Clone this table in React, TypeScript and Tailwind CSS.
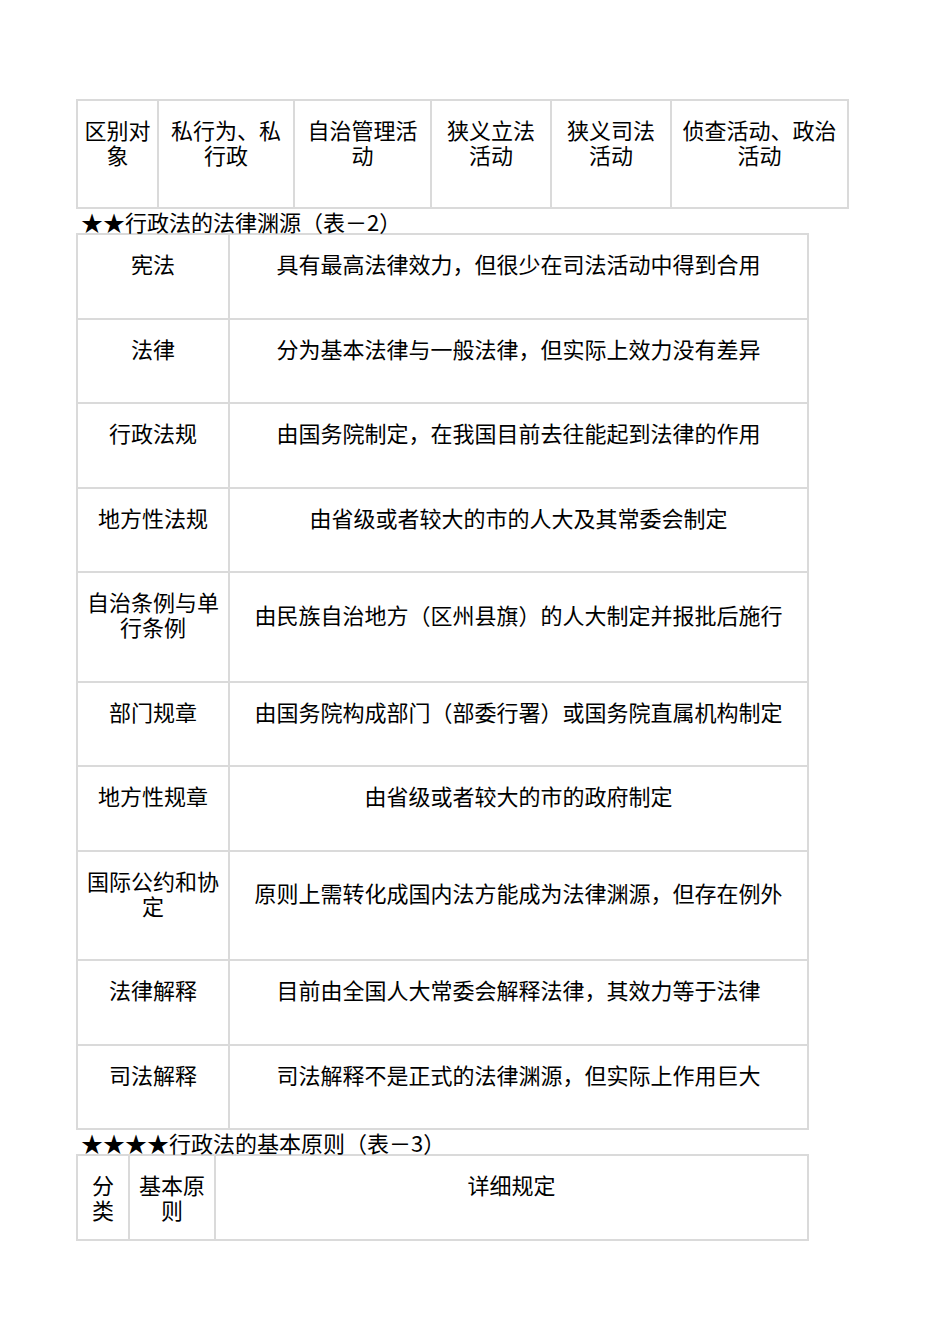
import React from "react";

const font = { fontFamily: '"Noto Sans CJK SC", "Noto Sans", sans-serif' };

const t2: [string, string][] = [
  ["宪法", "具有最高法律效力，但很少在司法活动中得到合用"],
  ["法律", "分为基本法律与一般法律，但实际上效力没有差异"],
  ["行政法规", "由国务院制定，在我国目前去往能起到法律的作用"],
  ["地方性法规", "由省级或者较大的市的人大及其常委会制定"],
  ["自治条例与单行条例", "由民族自治地方（区州县旗）的人大制定并报批后施行"],
  ["部门规章", "由国务院构成部门（部委行署）或国务院直属机构制定"],
  ["地方性规章", "由省级或者较大的市的政府制定"],
  ["国际公约和协定", "原则上需转化成国内法方能成为法律渊源，但存在例外"],
  ["法律解释", "目前由全国人大常委会解释法律，其效力等于法律"],
  ["司法解释", "司法解释不是正式的法律渊源，但实际上作用巨大"],
];

const cell =
  "border-2 border-[#dadada] px-[7px] pt-[16px] pb-[41.5px] text-center align-middle";
const cell1 =
  "border-2 border-[#dadada] px-[5px] pt-[16px] pb-[40px] text-center align-middle";
const cell3 =
  "border-2 border-[#dadada] px-[5px] pt-[16px] pb-[17px] text-center align-top";

export default function App() {
  return (
    <div
      className="w-[950px] min-h-[1344px] bg-white text-black text-[22px] leading-[25px] pt-[99px] pl-[76px]"
      style={font}
    >
      <table className="table-fixed border-collapse w-[771px]">
        <colgroup>
          <col className="w-[81px]" />
          <col className="w-[136px]" />
          <col className="w-[137px]" />
          <col className="w-[120px]" />
          <col className="w-[120px]" />
          <col className="w-[177px]" />
        </colgroup>
        <tbody>
          <tr>
            <td className={cell1}>区别对象</td>
            <td className={cell1}>私行为、私行政</td>
            <td className={cell1}>自治管理活动</td>
            <td className={cell1}>狭义立法活动</td>
            <td className={cell1}>狭义司法活动</td>
            <td className={cell1}>侦查活动、政治活动</td>
          </tr>
        </tbody>
      </table>
      <div className="pl-[5px] leading-[24px]">★★行政法的法律渊源（表－2）</div>
      <table className="table-fixed border-collapse w-[731px]">
        <colgroup>
          <col className="w-[152px]" />
          <col className="w-[579px]" />
        </colgroup>
        <tbody>
          {t2.map(([a, b]) => (
            <tr key={a}>
              <td className={cell}>{a}</td>
              <td className={cell}>{b}</td>
            </tr>
          ))}
        </tbody>
      </table>
      <div className="pl-[5px] leading-[24px]">★★★★行政法的基本原则（表－3）</div>
      <table className="table-fixed border-collapse w-[731px]">
        <colgroup>
          <col className="w-[52px]" />
          <col className="w-[86px]" />
          <col className="w-[593px]" />
        </colgroup>
        <tbody>
          <tr>
            <td className={cell3}>分类</td>
            <td className={cell3}>基本原则</td>
            <td className={cell3}>详细规定</td>
          </tr>
        </tbody>
      </table>
    </div>
  );
}
